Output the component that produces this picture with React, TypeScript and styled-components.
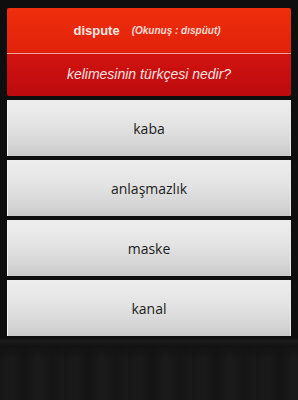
import React from "react";
import styled, { createGlobalStyle } from "styled-components";

const Global = createGlobalStyle`
  html, body { margin: 0; padding: 0; }
  body {
    width: 298px;
    height: 400px;
    overflow: hidden;
    background: #151515;
  }
`;

const Screen = styled.div`
  width: 298px;
  height: 400px;
  box-sizing: border-box;
  padding: 8px 7px 0 7px;
  display: flex;
  flex-direction: column;
  gap: 4px;
  background:
    linear-gradient(180deg, #0e0e0e 0px, #0e0e0e 338px, #1c1c1c 341px, #121212 346px, rgba(0,0,0,0) 360px),
    repeating-linear-gradient(90deg, #161616 0px, #1a1a1a 12px, #141414 24px, #1b1b1b 38px, #151515 52px, #191919 64px);
`;

const Header = styled.div`
  display: flex;
  flex-direction: column;
  border-radius: 2px;
  overflow: hidden;
  background: linear-gradient(180deg, #ee2e0c 0%, #e2220a 50%, #d21410 52%, #bc0a0e 100%);
  height: 88px;
`;

const WordRow = styled.div`
  height: 45px;
  display: flex;
  align-items: center;
  justify-content: center;
  gap: 12px;
  padding-right: 4px;
  border-bottom: 1px solid #f4a59a;
  font-family: "Liberation Sans", Arial, sans-serif;
  color: #ffffff;
`;

const Word = styled.span`
  font-size: 13px;
  font-weight: bold;
  color: #f6e8e4;
`;

const Pron = styled.span`
  font-size: 10px;
  font-weight: bold;
  font-style: italic;
  color: #f6dcd4;
`;

const Question = styled.div`
  flex: 1;
  display: flex;
  align-items: center;
  justify-content: center;
  font-family: "Liberation Sans", Arial, sans-serif;
  font-style: italic;
  font-size: 14px;
  color: #f6e2e0;
  padding-bottom: 2px;
`;

const Option = styled.button`
  height: 56px;
  flex: none;
  border: none;
  margin: 0;
  padding: 0;
  border-left: 1px solid #f4f4f4;
  border-right: 1px solid #e6e6e6;
  background: linear-gradient(180deg, #eeeeee 0%, #e3e3e3 45%, #d3d3d3 85%, #c8c8c8 100%);
  font-family: "Open Sans", "Noto Sans", sans-serif;
  font-size: 14px;
  color: #1c1c1c;
  display: flex;
  align-items: center;
  justify-content: center;
`;

const options = ["kaba", "anlaşmazlık", "maske", "kanal"];

export default function App() {
  return (
    <>
      <Global />
      <Screen>
        <Header>
          <WordRow>
            <Word>dispute</Word>
            <Pron>(Okunuş : dıspüut)</Pron>
          </WordRow>
          <Question>kelimesinin türkçesi nedir?</Question>
        </Header>
        {options.map((o) => (
          <Option key={o}>{o}</Option>
        ))}
      </Screen>
    </>
  );
}
